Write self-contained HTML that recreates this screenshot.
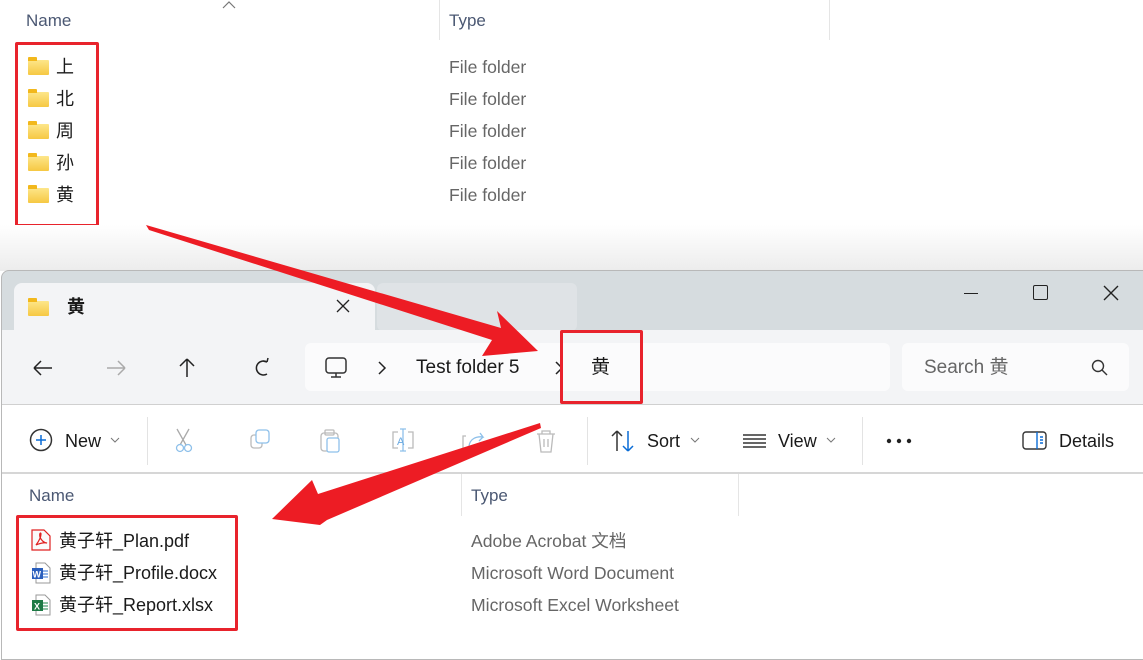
<!DOCTYPE html>
<html><head><meta charset="utf-8"><style>
*{margin:0;padding:0;box-sizing:border-box}
body{width:1143px;height:646px;overflow:hidden;background:#fff;position:relative;font-family:"Segoe UI","Liberation Sans","Noto Sans CJK SC",sans-serif;}
.a{position:absolute;white-space:nowrap;line-height:22px}
.g{color:#666;font-size:17.6px}
.k{color:#1a1a1a;font-size:18px}
.fold{position:absolute;width:21px;height:15px;background:linear-gradient(#fde68a,#f6c843);border-radius:1px}
.fold:before{content:"";position:absolute;left:0;top:-3px;width:9px;height:4px;background:#f2b81c;border-radius:1px 1px 0 0}
.red{position:absolute;border:3px solid #e8232c;border-radius:2px}
</style></head><body>
<svg style="position:absolute;left:222px;top:1px" width="14" height="8" fill="none" stroke="#777" stroke-width="1.2"><path d="M1 7L7 1L13 7"/></svg>
<div class="a" style="left:26px;top:10px;font-size:17px;color:#4b5873">Name</div>
<div style="position:absolute;left:439px;top:0;width:1px;height:40px;background:#e5e5e5"></div>
<div style="position:absolute;left:829px;top:0;width:1px;height:40px;background:#e5e5e5"></div>
<div class="a" style="left:449px;top:10px;font-size:17px;color:#4b5873">Type</div>
<div class="fold" style="left:28px;top:60px"></div><div class="a k" style="left:56px;top:56px">上</div><div class="a g" style="left:449px;top:56px">File folder</div>
<div class="fold" style="left:28px;top:92px"></div><div class="a k" style="left:56px;top:88px">北</div><div class="a g" style="left:449px;top:88px">File folder</div>
<div class="fold" style="left:28px;top:124px"></div><div class="a k" style="left:56px;top:120px">周</div><div class="a g" style="left:449px;top:120px">File folder</div>
<div class="fold" style="left:28px;top:156px"></div><div class="a k" style="left:56px;top:152px">孙</div><div class="a g" style="left:449px;top:152px">File folder</div>
<div class="fold" style="left:28px;top:188px"></div><div class="a k" style="left:56px;top:184px">黄</div><div class="a g" style="left:449px;top:184px">File folder</div>
<div class="red" style="left:15px;top:42px;width:84px;height:185px"></div>
<div style="position:absolute;left:0;top:225px;width:1143px;height:46px;background:linear-gradient(#fff,#ececec)"></div>
<div style="position:absolute;left:1px;top:270px;width:1150px;height:390px;border:1px solid #b8b8b8;border-radius:8px 8px 0 0;background:#d6dcdf;overflow:hidden">
 <div style="position:absolute;left:12px;top:12px;width:361px;height:50px;background:#f3f4f6;border-radius:8px 8px 0 0"></div>
 <div style="position:absolute;left:375px;top:12px;width:200px;height:48px;background:#dfe3e6;border-radius:6px"></div>
 <div class="fold" style="left:26px;top:30px"></div>
 <div class="a" style="left:65px;top:25px;font-size:18px;font-weight:bold;color:#1a1a1a">黄</div>
 <svg style="position:absolute;left:334px;top:28px" width="14" height="14" stroke="#222" stroke-width="1.3"><path d="M1 1L13 13M13 1L1 13"/></svg>
 <div style="position:absolute;left:962px;top:22px;width:14px;height:1px;background:#222"></div>
 <div style="position:absolute;left:1031px;top:14px;width:15px;height:15px;border:1.5px solid #222;border-radius:2px"></div>
 <svg style="position:absolute;left:1101px;top:14px" width="16" height="16" stroke="#222" stroke-width="1.4"><path d="M1 1L15 15M15 1L1 15"/></svg>
 <div style="position:absolute;left:0;top:59px;width:1150px;height:75px;background:#f3f4f6"></div>
 <svg style="position:absolute;left:29px;top:85px" width="250" height="24" fill="none" stroke-width="1.5">
  <path d="M3 12H21M3 12L10 5M3 12L10 19" stroke="#222"/>
  <path d="M76 12H94M94 12L87 5M94 12L87 19" stroke="#aaa"/>
  <path d="M156 21V3M156 3L149 10M156 3L163 10" stroke="#222"/>
  <path d="M236 6A7 7 0 1 0 236 18 M236 6 L232 5 M236 6 L237 2" stroke="#222"/>
 </svg>
 <div style="position:absolute;left:303px;top:72px;width:585px;height:48px;background:#fbfbfc;border-radius:6px"></div>
 <svg style="position:absolute;left:323px;top:86px" width="22" height="22" fill="none" stroke="#333" stroke-width="1.5"><rect x="1" y="1" width="20" height="15" rx="3"/><path d="M11 16V20M6 20H16"/></svg>
 <svg style="position:absolute;left:375px;top:90px" width="10" height="14" fill="none" stroke="#222" stroke-width="1.5"><path d="M2 1L8 7L2 13"/></svg>
 <div class="a" style="left:414px;top:86px;font-size:19px;color:#1a1a1a">Test folder 5</div>
 <svg style="position:absolute;left:552px;top:90px" width="10" height="14" fill="none" stroke="#222" stroke-width="1.5"><path d="M2 1L8 7L2 13"/></svg>
 <div class="a" style="left:589px;top:86px;font-size:19px;color:#1a1a1a">黄</div>
 <div style="position:absolute;left:900px;top:72px;width:227px;height:48px;background:#fbfbfc;border-radius:6px"></div>
 <div class="a" style="left:922px;top:86px;font-size:19px;color:#666">Search 黄</div>
 <svg style="position:absolute;left:1089px;top:88px" width="18" height="18" fill="none" stroke="#333" stroke-width="1.4"><circle cx="7" cy="7" r="5.5"/><path d="M11 11L16 16"/></svg>
 <div style="position:absolute;left:0;top:133px;width:1150px;height:1px;background:#d0d0d0"></div>
 <div style="position:absolute;left:0;top:134px;width:1150px;height:68px;background:#fff"></div>
 <div style="position:absolute;left:0;top:201px;width:1150px;height:2px;background:#d6d6d6"></div>
 <svg style="position:absolute;left:27px;top:157px" width="24" height="24" fill="none" stroke-width="1.5"><circle cx="12" cy="12" r="10.5" stroke="#333"/><path d="M12 7V17M7 12H17" stroke="#0a6cd6"/></svg>
 <div class="a" style="left:63px;top:159px;font-size:18px;color:#1a1a1a">New</div>
 <svg style="position:absolute;left:108px;top:166px" width="10" height="6" fill="none" stroke="#777"><path d="M1 1L5 5L9 1"/></svg>
 <div style="position:absolute;left:145px;top:146px;width:1px;height:48px;background:#e3e3e3"></div>
 <svg style="position:absolute;left:169px;top:155px" width="400" height="30" fill="none" stroke-width="1.3">
  <path d="M6 3L15 19M18 3L9 19" stroke="#aaa"/><circle cx="9" cy="22" r="3.5" stroke="#8ec0ea"/><circle cx="17" cy="22" r="3.5" stroke="#8ec0ea"/>
  <rect x="80" y="9" width="11" height="13" rx="3" stroke="#bbb"/><rect x="85" y="4" width="13" height="13" rx="3" stroke="#8ec0ea" fill="#fff"/>
  <rect x="150" y="7" width="17" height="18" rx="3" stroke="#bbb"/><rect x="154" y="4" width="9" height="5" rx="1" stroke="#bbb"/><rect x="156" y="12" width="12" height="14" rx="2" stroke="#8ec0ea" fill="#fff"/>
  <path d="M227 6H222V22H227M237 6H242V22H237" stroke="#bbb"/><path d="M232 3V25M229 3H235M229 25H235" stroke="#8ec0ea"/><text x="226" y="19" font-size="11" fill="#6aa9e0" font-family="Liberation Sans">A</text>
  <path d="M295 10H292V24H307V18" stroke="#bbb"/><path d="M298 20C299 13 305 10 312 11L309 7M312 11L308 15" stroke="#8ec0ea"/>
  <path d="M366 8H384M371 8V5H379V8M368 8L370 26H380L382 8M373 13V21M377 13V21" stroke="#bbb"/>
 </svg>
 <div style="position:absolute;left:585px;top:146px;width:1px;height:48px;background:#e3e3e3"></div>
 <svg style="position:absolute;left:609px;top:158px" width="26" height="24" fill="none" stroke-width="1.5"><path d="M6 22V2M6 2L1 7M6 2L11 7" stroke="#333"/><path d="M17 2V22M17 22L12 17M17 22L22 17" stroke="#0a6cd6"/></svg>
 <div class="a" style="left:645px;top:159px;font-size:18px;color:#1a1a1a">Sort</div>
 <svg style="position:absolute;left:688px;top:166px" width="10" height="6" fill="none" stroke="#777"><path d="M1 1L5 5L9 1"/></svg>
 <svg style="position:absolute;left:741px;top:162px" width="24" height="16" stroke="#333" stroke-width="1.4"><path d="M0 2H23M0 6H23M0 10H23M0 14H23"/></svg>
 <div class="a" style="left:776px;top:159px;font-size:18px;color:#1a1a1a">View</div>
 <svg style="position:absolute;left:824px;top:166px" width="10" height="6" fill="none" stroke="#777"><path d="M1 1L5 5L9 1"/></svg>
 <div style="position:absolute;left:860px;top:146px;width:1px;height:48px;background:#e3e3e3"></div>
 <svg style="position:absolute;left:884px;top:167px" width="28" height="6" fill="#222"><circle cx="3" cy="3" r="2.2"/><circle cx="13" cy="3" r="2.2"/><circle cx="23" cy="3" r="2.2"/></svg>
 <svg style="position:absolute;left:1020px;top:160px" width="26" height="20" fill="none" stroke-width="1.4"><rect x="1" y="1" width="23" height="17" rx="3" stroke="#333"/><path d="M15 1V18" stroke="#0a6cd6"/><path d="M18 6H21M18 9H21M18 12H21" stroke="#0a6cd6"/></svg>
 <div class="a" style="left:1057px;top:159px;font-size:18px;color:#1a1a1a">Details</div>
 <div style="position:absolute;left:0;top:203px;width:1150px;height:200px;background:#fff"></div>
 <div class="a" style="left:27px;top:214px;font-size:17px;color:#4b5873">Name</div>
 <div style="position:absolute;left:459px;top:203px;width:1px;height:42px;background:#e5e5e5"></div>
 <div style="position:absolute;left:736px;top:203px;width:1px;height:42px;background:#e5e5e5"></div>
 <div class="a" style="left:469px;top:214px;font-size:17px;color:#4b5873">Type</div>
 <svg style="position:absolute;left:29px;top:258px" width="20" height="22"><path d="M1 1H13L19 7V21H1Z" fill="#fafafa" stroke="#e02020" stroke-width="1.2"/><path d="M5 16C8 12 10 8 10 5C10 3 8 4 9 8C10 11 13 14 16 14C13 13 7 15 5 16Z" fill="none" stroke="#e02020" stroke-width="1.2"/></svg>
 <div class="a k" style="left:57px;top:259px">黄子轩_Plan.pdf</div>
 <div class="a g" style="left:469px;top:259px">Adobe Acrobat 文档</div>
 <svg style="position:absolute;left:29px;top:291px" width="20" height="22"><path d="M5 1H14L19 6V21H5Z" fill="#fff" stroke="#999"/><path d="M12 9H17M12 12H17M12 15H17" stroke="#2b6cd2"/><rect x="1" y="6" width="11" height="11" fill="#2b5fbd"/><text x="1.5" y="15.5" font-size="9" fill="#fff" font-weight="bold" font-family="Liberation Sans">W</text></svg>
 <div class="a k" style="left:57px;top:291px">黄子轩_Profile.docx</div>
 <div class="a g" style="left:469px;top:291px">Microsoft Word Document</div>
 <svg style="position:absolute;left:29px;top:323px" width="20" height="22"><path d="M5 1H14L19 6V21H5Z" fill="#fff" stroke="#999"/><path d="M12 9H17M12 12H17M12 15H17" stroke="#1f8a4c"/><rect x="1" y="6" width="11" height="11" fill="#1d7a45"/><text x="3" y="15.5" font-size="9" fill="#fff" font-weight="bold" font-family="Liberation Sans">X</text></svg>
 <div class="a k" style="left:57px;top:323px">黄子轩_Report.xlsx</div>
 <div class="a g" style="left:469px;top:323px">Microsoft Excel Worksheet</div>
</div>
<div class="red" style="left:560px;top:330px;width:83px;height:74px"></div>
<div class="red" style="left:16px;top:515px;width:222px;height:116px"></div>
<svg style="position:absolute;left:0;top:0" width="1143" height="646">
 <polygon fill="#ed1c24" points="146,225 149,230 492,340 482,356 538,351 497,311 501,328"/>
 <polygon fill="#ed1c24" points="540,423 541,428 327,520 320,525 272,519 312,480 318,494"/>
</svg>
</body></html>
